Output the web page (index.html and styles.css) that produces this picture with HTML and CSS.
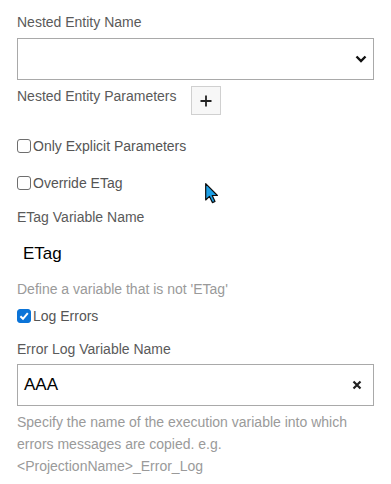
FILE: index.html
```html
<!DOCTYPE html>
<html lang="en">

<head>
    <meta charset="UTF-8">
    <meta name="viewport" content="width=device-width, initial-scale=1.0">
    <title>Nested Entity Settings</title>
    <link rel="stylesheet" href="styles.css">
</head>

<body>
    <div class="form">
        <div class="field-label">Nested Entity Name</div>
        <div class="select-box">
            <svg class="chevron" width="12" height="8" viewBox="0 0 12 8">
                <path d="M1.5 1.5 L6 6 L10.5 1.5" fill="none" stroke="#111" stroke-width="2.4" />
            </svg>
        </div>

        <div class="params-row">
            <span>Nested Entity Parameters</span>
            <button class="add-btn" type="button">
                <svg width="12" height="12" viewBox="0 0 12 12">
                    <path d="M6 0.5 V11.5 M0.5 6 H11.5" stroke="#222" stroke-width="1.8" />
                </svg>
            </button>
        </div>

        <label class="check-row first"><span class="box"></span>Only Explicit Parameters</label>
        <label class="check-row second"><span class="box"></span>Override ETag</label>

        <div class="field-label etag-label">ETag Variable Name</div>
        <div class="plain-input">ETag</div>
        <div class="help">Define a variable that is not 'ETag'</div>

        <label class="check-row log">
            <span class="box checked">
                <svg width="10" height="10" viewBox="0 0 10 10">
                    <path d="M1.4 5.2 L4 7.8 L8.8 2.2" fill="none" stroke="#fff" stroke-width="2" />
                </svg>
            </span>Log Errors
        </label>

        <div class="field-label error-label">Error Log Variable Name</div>
        <div class="text-box">
            <span>AAA</span>
            <svg class="clear" width="10" height="10" viewBox="0 0 10 10">
                <path d="M1.5 1.5 L8.5 8.5 M8.5 1.5 L1.5 8.5" stroke="#222" stroke-width="2.2" />
            </svg>
        </div>
        <div class="help long">Specify the name of the execution variable into which errors messages are copied. e.g. &lt;ProjectionName&gt;_Error_Log</div>
    </div>

    <!-- mouse pointer caught in the screenshot -->
    <svg class="pointer" width="15" height="21" viewBox="0 0 15 21">
        <path d="M0.7 0.7 L0.7 17 L4.5 13.4 L7.4 19.6 L10 18.5 L7.2 12.5 L12.4 12.5 Z" fill="#1ea0e6" stroke="#0d0d0d" stroke-width="1.2" stroke-linejoin="round" />
    </svg>
</body>

</html>
```

FILE: styles.css
```css
body {
    margin: 0;
    font-family: "Liberation Sans", Arial, sans-serif;
    font-size: 14px;
    color: #5a5a5a;
    background: #fff;
}

.form {
    width: 357px;
    padding: 12px 17px 0 17px;
}

.field-label {
    line-height: 20px;
}

.select-box {
    box-sizing: border-box;
    height: 42px;
    margin-top: 6px;
    border: 1px solid #a9a9a9;
    display: flex;
    align-items: center;
    justify-content: flex-end;
    padding-right: 6px;
}

.params-row {
    display: flex;
    align-items: flex-start;
    gap: 14px;
    margin-top: 6px;
    line-height: 20px;
}

.add-btn {
    box-sizing: border-box;
    width: 30px;
    height: 29px;
    margin: 0;
    padding: 0;
    border: 1px solid #d0d0d0;
    background: #f7f7f7;
    display: flex;
    align-items: center;
    justify-content: center;
}

.check-row {
    display: flex;
    align-items: center;
    line-height: 20px;
    color: #555;
}

.box {
    box-sizing: border-box;
    width: 14px;
    height: 14px;
    margin-right: 2px;
    border: 1px solid #6e6e6e;
    border-radius: 3px;
    background: #fff;
    display: flex;
    align-items: center;
    justify-content: center;
}

.box.checked {
    border-color: #0b74d8;
    background: #0b74d8;
}

.check-row.first {
    margin-top: 21px;
}

.check-row.second {
    margin-top: 17px;
}

.check-row.log {
    margin-top: 6px;
}

.etag-label {
    margin-top: 14px;
}

.error-label {
    margin-top: 13px;
}

.plain-input {
    height: 36px;
    margin-top: 9px;
    padding-left: 6px;
    font-size: 17px;
    line-height: 36px;
    color: #000;
}

.help {
    margin-top: 6px;
    color: #9a9a9a;
    line-height: 22px;
}

.help.long {
    margin-top: 5px;
}

.text-box {
    box-sizing: border-box;
    height: 42px;
    margin-top: 5px;
    border: 1px solid #a9a9a9;
    display: flex;
    align-items: center;
    justify-content: space-between;
    padding: 0 11px 0 6px;
    font-size: 17px;
    color: #000;
}

.pointer {
    position: absolute;
    left: 205px;
    top: 183px;
}
```
